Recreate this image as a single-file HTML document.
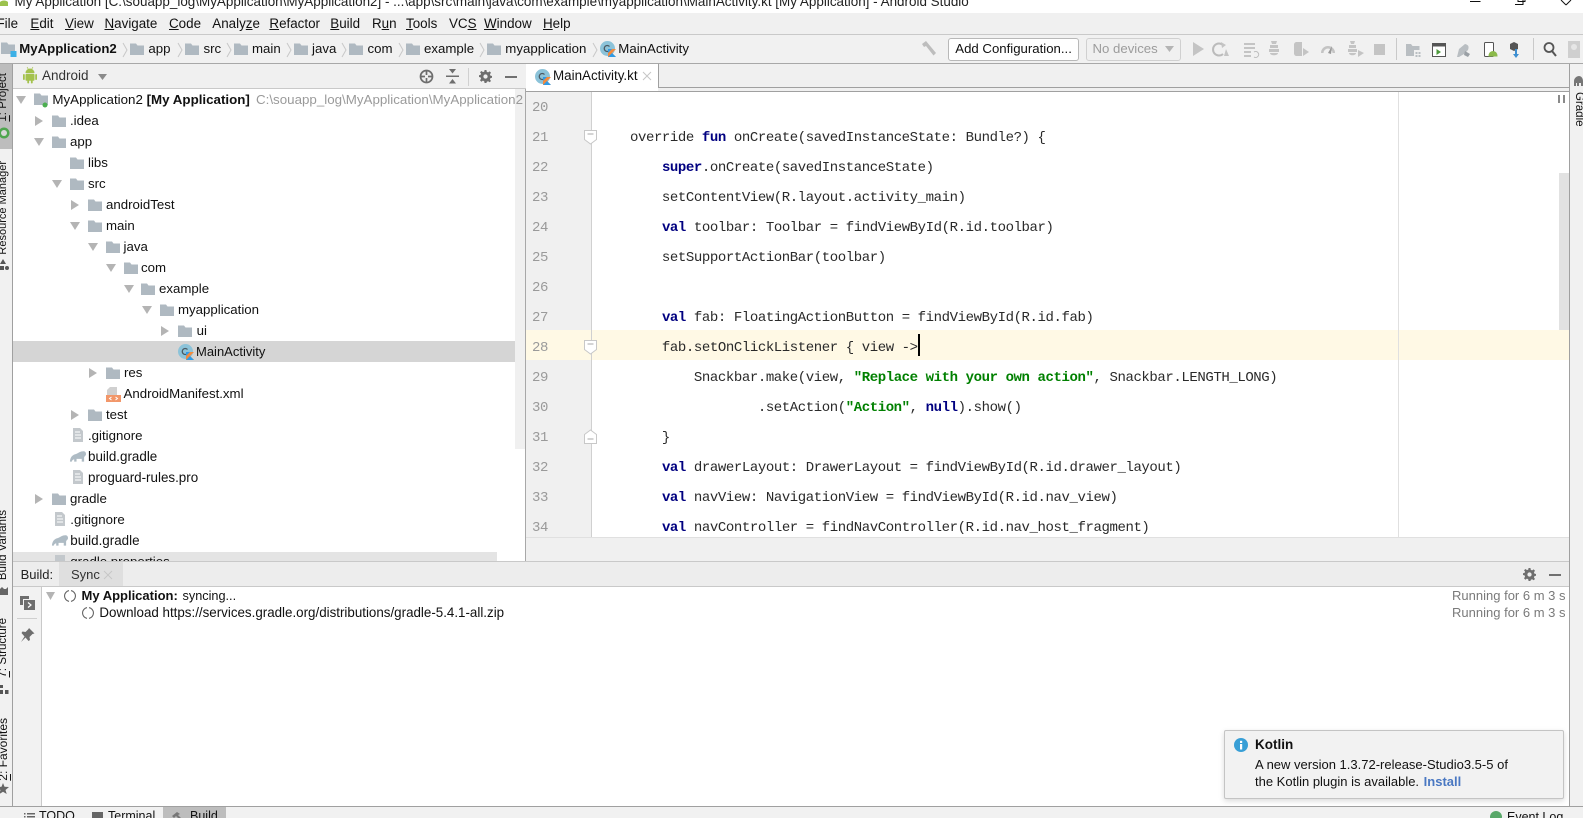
<!DOCTYPE html>
<html><head><meta charset="utf-8"><style>
html,body{margin:0;padding:0;width:1583px;height:818px;overflow:hidden;background:#fff}
body{position:relative;font-family:"Liberation Sans","Noto Sans CJK SC",sans-serif;font-size:13.25px;color:#111}
.a,.t,.c,.n{position:absolute}
.t{white-space:pre;line-height:20px;height:20px}
.c{white-space:pre;line-height:20px;height:20px;left:598px;font-family:"Liberation Mono",monospace;font-size:14px;letter-spacing:-.41px;color:#2a2a2a}
.n{white-space:pre;line-height:20px;height:20px;left:532px;font-family:"Liberation Mono",monospace;font-size:14px;letter-spacing:-.4px;color:#9a9a9a}
.c b{color:#000080}.c i{color:#008000;font-weight:bold;font-style:normal}
svg{position:absolute;overflow:visible}
.v{position:absolute;writing-mode:vertical-rl;transform:rotate(180deg);white-space:pre;line-height:13px;font-size:11.5px;color:#111}
u{text-decoration:underline}
.m{font-size:13.4px;top:14px}
.b{font-size:13.25px;top:39px}
</style></head><body>
<svg width="0" height="0" style="position:absolute"><defs>
<symbol id="f" viewBox="0 0 14 12"><path d="M0 0.5h6l1.5 2H14V12H0z" fill="#afb9c1"/></symbol>
<symbol id="k" viewBox="0 0 16 16"><circle cx="7.5" cy="7.5" r="7.5" fill="#8cc3d9"/><path d="M9.5 5.5A3 3 0 1 0 9.5 9.5" fill="none" stroke="#4b5a63" stroke-width="1.3"/><path d="M8 16V8h8L12 12l4 4z" fill="#f58a3c"/><path d="M8 16l4-4 4 4z" fill="#2f9be6"/><path d="M8 12l4-4h-4z" fill="#2f9be6"/></symbol>
<symbol id="r" viewBox="0 0 8 10"><path d="M0 0l8 5-8 5z" fill="#b4b4b4"/></symbol>
<symbol id="d" viewBox="0 0 10 8"><path d="M0 0h10L5 8z" fill="#b4b4b4"/></symbol>
<symbol id="file" viewBox="0 0 12 14"><path d="M1 0h7l3 3v11H1z" fill="#c3c8cc"/><path d="M3 4h5M3 7h6M3 10h6" stroke="#fff"/></symbol>
<symbol id="g" viewBox="0 0 18 12"><path d="M1 12c0-2 1-7 6-8 3-1 5-3 8-3 2 0 3 1 3 3 0 2-2 2-2 4v4h-2.500V9H8v3H5.500V9.500C4 10 3 11 3 12z" fill="#aebbc4"/></symbol>
<symbol id="gear" viewBox="0 0 14 14"><path fill-rule="evenodd" d="M6 0h2l.4 2 1.400.6L11.500 1.500 12.900 3l-1.100 1.600.5 1.400 1.700.4v2l-1.700.4-.5 1.400 1.100 1.600-1.400 1.400-1.700-1.100-1.400.6L8 14H6l-.4-1.900-1.400-.6-1.700 1.100L1.100 11l1.100-1.600-.5-1.400L0 7.600v-2L1.700 5.200l.5-1.400L1.100 2.500 2.500 1.100l1.700 1.100L5.600 1.900zM7 4.700A2.300 2.300 0 1 0 7 9.300 2.300 2.300 0 0 0 7 4.700z" fill="#6e6e6e"/></symbol>
<symbol id="spin" viewBox="0 0 12 12"><path d="M5 .6A5.500 5.500 0 0 0 5 11.400M7 .6A5.500 5.500 0 0 1 7 11.400" fill="none" stroke="#666" stroke-width="1.100"/></symbol>
</defs></svg>

<!-- backgrounds -->
<div class="a" style="left:0;top:13px;width:1583px;height:21px;background:#f0f0f0"></div>
<div class="a" style="left:0;top:34px;width:1583px;height:1px;background:#c9c9c9"></div>
<div class="a" style="left:0;top:35px;width:1583px;height:28px;background:#f1f1f1"></div>
<div class="a" style="left:0;top:63px;width:1583px;height:1px;background:#a8a8a8"></div>

<!-- title bar -->
<svg style="left:0;top:0" width="9" height="6"><path d="M0 6V2c2-2 6-2 8 0v4z" fill="#9cc24e"/></svg>
<div class="t" id="title" style="left:14.500px;top:-8px;font-size:13.44px;color:#222">My Application [C:\souapp_log\MyApplication\MyApplication2] - ...\app\src\main\java\com\example\myapplication\MainActivity.kt [My Application] - Android Studio</div>
<svg style="left:1470px;top:0" width="102" height="6"><path d="M0 1.500h10.500" stroke="#111" stroke-width="1"/><path d="M45 4.500H53V0M48 0V1.500H55V0" fill="none" stroke="#111"/><path d="M91 0l5 5M101 0l-5 5" stroke="#111"/></svg>

<!-- menu -->
<div class="t m" style="left:-3.500px">File</div>
<div class="t m" style="left:30.400px"><u>E</u>dit</div>
<div class="t m" style="left:65px"><u>V</u>iew</div>
<div class="t m" style="left:104.500px"><u>N</u>avigate</div>
<div class="t m" style="left:169px"><u>C</u>ode</div>
<div class="t m" style="left:212.300px">Analy<u>z</u>e</div>
<div class="t m" style="left:269.400px"><u>R</u>efactor</div>
<div class="t m" style="left:330.300px"><u>B</u>uild</div>
<div class="t m" style="left:372px">R<u>u</u>n</div>
<div class="t m" style="left:406px"><u>T</u>ools</div>
<div class="t m" style="left:449px">VC<u>S</u></div>
<div class="t m" style="left:484px"><u>W</u>indow</div>
<div class="t m" style="left:543px"><u>H</u>elp</div>

<!-- breadcrumb -->
<svg style="left:1px;top:42px" width="16" height="15"><use href="#f" width="14" height="12"/><rect x="9.500" y="9" width="6" height="6" fill="#3cb0e6"/></svg>
<div class="t b" style="left:19.300px;font-weight:bold;font-size:13.2px">MyApplication2</div>
<svg style="left:123px;top:42px" width="480" height="16" fill="none" stroke="#c8c8c8"><path d="M0 1l4 7-4 7M55 1l4 7-4 7M104 1l4 7-4 7M164 1l4 7-4 7M219 1l4 7-4 7M276 1l4 7-4 7M357 1l4 7-4 7M470 1l4 7-4 7"/></svg>
<svg style="left:130px;top:43px" width="14" height="12"><use href="#f"/></svg><div class="t b" style="left:148.400px">app</div>
<svg style="left:185px;top:43px" width="14" height="12"><use href="#f"/></svg><div class="t b" style="left:203.500px">src</div>
<svg style="left:234px;top:43px" width="14" height="12"><use href="#f"/></svg><div class="t b" style="left:252px">main</div>
<svg style="left:294px;top:43px" width="14" height="12"><use href="#f"/></svg><div class="t b" style="left:312px">java</div>
<svg style="left:349px;top:43px" width="14" height="12"><use href="#f"/></svg><div class="t b" style="left:367.500px">com</div>
<svg style="left:406px;top:43px" width="14" height="12"><use href="#f"/></svg><div class="t b" style="left:424px">example</div>
<svg style="left:487px;top:43px" width="14" height="12"><use href="#f"/></svg><div class="t b" style="left:505.300px">myapplication</div>
<svg style="left:600px;top:41px" width="16" height="16"><use href="#k"/></svg><div class="t b" style="left:618.300px">MainActivity</div>

<!-- toolbar right -->
<svg style="left:921px;top:41px" width="16" height="16"><path d="M1 3l4-3 10 12-2.500 2.500L5 5 3 6z" fill="#bdbdbd"/></svg>
<div class="a" style="left:948px;top:38px;width:128.500px;height:20.500px;border:1px solid #b8b8b8;border-radius:3px;background:#fff"></div>
<div class="t" style="left:955.300px;top:39px;font-size:13.2px">Add Configuration...</div>
<div class="a" style="left:1085.500px;top:38px;width:93px;height:20.500px;border:1px solid #d0d0d0;border-radius:3px;background:#f0f0f0"></div>
<div class="t" style="left:1092.500px;top:39px;font-size:13.200px;color:#9c9c9c">No devices</div>
<svg style="left:1165px;top:46px" width="9" height="6"><path d="M0 0h9L4.500 6z" fill="#b4b4b4"/></svg>
<svg style="left:1190px;top:40px" width="200" height="18" fill="#c4c4c4">
<path d="M3 2l11 7-11 7z"/>
<path d="M33 5a6 6 0 1 0 0 9" fill="none" stroke="#bbb" stroke-width="2"/><path d="M31 2l5 3-4 3zM36 9l3 7h-5z"/>
<path d="M54 3h11v2H54zM54 7h11v2H54zM54 11h7v2H54zM54 15h7v2H54z"/><path d="M64 12a3 3 0 1 1 0 5" fill="none" stroke="#bbb"/>
<path d="M80 5h8v3h-8zM79 9h10v3H79zM80 13h8c0 3-8 3-8 0zM81 1l1 3h4l1-3z"/>
<path d="M106 2h6v14h-6a3 3 0 0 1-2-2V4a3 3 0 0 1 2-2zM113 8l6 4-6 4z"/>
<path d="M131 13a7 7 0 1 1 14 0h-2.500a4.500 4.500 0 0 0-9 0z"/><path d="M138 13l4-7 -1 8z" fill="#999"/>
<path d="M159 5h7v3h-7zM158 9h9v3h-9zM159 13h7c0 3-7 3-7 0zM160 1l1 3h3l1-3zM168 10l6 3-6 4z"/>
<rect x="184" y="4" width="11" height="11"/>
<rect x="206" y="-2" width="1" height="22" fill="#c9c9c9"/></svg>
<svg style="left:1405px;top:40px" width="175" height="20">
<path d="M1 4h5l1.500 2h7v4H9v6H1z" fill="#b9bec2"/><path d="M10.500 12h2v2h-2zM13.500 12h2v2h-2zM10.500 15h2v2h-2zM13.500 15h2v2h-2z" fill="#b9bec2"/>
<rect x="27.500" y="3.500" width="13" height="13" fill="#fff" stroke="#555"/><rect x="27.500" y="3.500" width="13" height="3" fill="#555"/><path d="M31.500 9l4.500 3-4.500 3z" fill="#4e9a3c"/>
<path d="M52 17l2-8 6-5c4 1 4 3 3 6l-4 4-5 3z" fill="#b9bec2"/><path d="M60 11l5 3-2 3-4-2z" fill="#9aa0a5"/>
<rect x="79.500" y="2.500" width="9" height="14" rx="1" fill="#fff" stroke="#555"/><path d="M84 16c0-6 8-6 8 0z" fill="#8cba4a" stroke="#8cba4a"/>
<path d="M105 4l4-2 4 2v5l-4 2-4-2z" fill="#555"/><rect x="110" y="9" width="2" height="6" fill="#3d8fd1"/><path d="M108 14h6l-3 4z" fill="#3d8fd1"/>
<rect x="128" y="-2" width="1" height="22" fill="#c9c9c9"/>
<circle cx="144" cy="7.500" r="4.500" fill="none" stroke="#555" stroke-width="1.800"/><path d="M147 11l4 5" stroke="#555" stroke-width="2"/>
<rect x="163" y="1" width="12" height="17" fill="#cfcfcf"/><circle cx="169" cy="7" r="3" fill="#e6e6e6"/></svg>

<!-- left strip -->
<div class="a" style="left:0;top:64px;width:12px;height:742px;background:#f1f1f1"></div>
<div class="a" style="left:0;top:64px;width:12px;height:85px;background:#bdbdbd"></div>
<div class="a" style="left:12px;top:64px;width:1px;height:742px;background:#a0a0a0"></div>
<div class="v" style="left:-3px;top:73px"><u>1</u>: Project</div>
<svg style="left:-2px;top:127px" width="12" height="12"><circle cx="6" cy="6" r="5.500" fill="#4fa64f"/><circle cx="6" cy="6" r="3" fill="#d8d8d8"/></svg>
<div class="v" style="left:-3px;top:161px;font-size:11px">Resource Manager</div>
<svg style="left:0;top:259px" width="9" height="13" fill="#555"><path d="M3 0l3 5H0z"/><rect x="0" y="7" width="4" height="4"/><circle cx="7" cy="9" r="2"/></svg>
<div class="v" style="left:-3px;top:510px">Build Variants</div>
<svg style="left:0;top:587px" width="9" height="8"><path d="M0 8V2l2-2 2 2h2l2-2v8z" fill="#666"/></svg>
<div class="v" style="left:-3px;top:618px"><u>7</u>: Structure</div>
<svg style="left:0;top:685px" width="9" height="10" fill="#555"><rect x="0" y="0" width="3" height="3"/><rect x="0" y="5" width="3" height="4"/><rect x="5" y="5" width="3.500" height="4"/></svg>
<div class="v" style="left:-3px;top:718px;font-size:12px"><u>2</u>: Favorites</div>
<svg style="left:-2px;top:783px" width="11" height="11"><path d="M5 0l1.500 3.800L11 4 7.500 7l1.200 4L5 8.800 1.300 11l1.200-4L-1 4l4.500-.2z" fill="#666"/></svg>

<!-- project header -->
<div class="a" style="left:13px;top:64px;width:513px;height:24px;background:#f0f0f0"></div>
<div class="a" style="left:13px;top:88px;width:513px;height:1px;background:#c9c9c9"></div>
<svg style="left:23px;top:67px" width="14" height="17" fill="#a4c24d"><path d="M2.500 6a4.500 4.500 0 0 1 9 0z"/><rect x="2.500" y="6.800" width="9" height="7" rx="1"/><rect x="0" y="7" width="1.800" height="6" rx=".9"/><rect x="12.200" y="7" width="1.800" height="6" rx=".9"/><rect x="4.300" y="13" width="1.800" height="3.500" rx=".9"/><rect x="7.900" y="13" width="1.800" height="3.500" rx=".9"/><path d="M4 0l1.500 2.500M10 0L8.500 2.500" stroke="#a4c24d" stroke-width=".7"/></svg>
<div class="t" style="left:42px;top:66px;font-size:13.5px;color:#333">Android</div>
<svg style="left:98px;top:74px" width="9" height="6"><path d="M0 0h9L4.500 6z" fill="#8a8a8a"/></svg>
<svg style="left:419px;top:69px" width="15" height="15" fill="none" stroke="#6e6e6e" stroke-width="1.700"><circle cx="7.500" cy="7.500" r="6"/><path d="M7.500 2v4M7.500 9v4M2 7.500h4M9 7.500h4"/></svg>
<svg style="left:446px;top:69px" width="13" height="15" fill="#6e6e6e"><rect y="6.500" width="13" height="1.500"/><path d="M3 0h7L6.500 4.500zM3 14.500h7L6.500 10z"/></svg>
<div class="a" style="left:468px;top:68px;width:1px;height:18px;background:#d0d0d0"></div>
<svg style="left:479px;top:70px" width="13" height="13"><use href="#gear"/></svg>
<div class="a" style="left:505px;top:75.500px;width:12px;height:2px;background:#707070"></div>

<!-- tree -->
<div class="a" style="left:13px;top:341px;width:513px;height:21px;background:#d5d5d5"></div>
<div class="a" style="left:515px;top:89px;width:10px;height:360px;background:#f0f0f0"></div>
<div class="a" style="left:13px;top:551.500px;width:484px;height:10px;background:#e4e4e4"></div>
<div class="a" style="left:525px;top:89px;width:1px;height:473px;background:#a8a8a8"></div>

<svg style="left:16px;top:96px" width="10" height="8"><use href="#d"/></svg>
<svg style="left:34px;top:93px" width="14" height="12"><use href="#f"/></svg>
<svg style="left:42px;top:102px" width="6" height="6"><circle cx="3" cy="3" r="2.500" fill="#4caf50"/></svg>
<div class="t" style="left:52.400px;top:89.500px;font-size:13.35px">MyApplication2 <b>[My Application]</b></div>
<div class="t" style="left:256px;top:89.500px;color:#9a9a9a;font-size:13.35px">C:\souapp_log\MyApplication\MyApplication2</div>

<svg style="left:35px;top:116px" width="8" height="10"><use href="#r"/></svg><svg style="left:52.400px;top:115px" width="14" height="12"><use href="#f"/></svg><div class="t" style="left:70px;top:110.500px">.idea</div>
<svg style="left:34px;top:138px" width="10" height="8"><use href="#d"/></svg><svg style="left:52.400px;top:136px" width="14" height="12"><use href="#f"/></svg><div class="t" style="left:70px;top:131.500px">app</div>
<svg style="left:70px;top:157px" width="14" height="12"><use href="#f"/></svg><div class="t" style="left:88px;top:152.500px">libs</div>
<svg style="left:52px;top:180px" width="10" height="8"><use href="#d"/></svg><svg style="left:70px;top:178px" width="14" height="12"><use href="#f"/></svg><div class="t" style="left:88px;top:173.500px">src</div>
<svg style="left:71px;top:200px" width="8" height="10"><use href="#r"/></svg><svg style="left:88px;top:199px" width="14" height="12"><use href="#f"/></svg><div class="t" style="left:106px;top:194.500px">androidTest</div>
<svg style="left:70px;top:222px" width="10" height="8"><use href="#d"/></svg><svg style="left:88px;top:220px" width="14" height="12"><use href="#f"/></svg><div class="t" style="left:106px;top:215.500px">main</div>
<svg style="left:88px;top:243px" width="10" height="8"><use href="#d"/></svg><svg style="left:106px;top:241px" width="14" height="12"><use href="#f"/></svg><div class="t" style="left:123.500px;top:236.500px">java</div>
<svg style="left:106px;top:264px" width="10" height="8"><use href="#d"/></svg><svg style="left:123.500px;top:262px" width="14" height="12"><use href="#f"/></svg><div class="t" style="left:141px;top:257.500px">com</div>
<svg style="left:124px;top:285px" width="10" height="8"><use href="#d"/></svg><svg style="left:141px;top:283px" width="14" height="12"><use href="#f"/></svg><div class="t" style="left:159px;top:278.500px">example</div>
<svg style="left:142px;top:306px" width="10" height="8"><use href="#d"/></svg><svg style="left:160px;top:304px" width="14" height="12"><use href="#f"/></svg><div class="t" style="left:178px;top:299.500px">myapplication</div>
<svg style="left:161px;top:326px" width="8" height="10"><use href="#r"/></svg><svg style="left:178px;top:325px" width="14" height="12"><use href="#f"/></svg><div class="t" style="left:196.600px;top:320.500px">ui</div>
<svg style="left:178px;top:344px" width="16" height="16"><use href="#k"/></svg><div class="t" style="left:196px;top:341.500px;font-size:13px">MainActivity</div>
<svg style="left:89px;top:368px" width="8" height="10"><use href="#r"/></svg><svg style="left:106px;top:367px" width="14" height="12"><use href="#f"/></svg><div class="t" style="left:124px;top:362.500px">res</div>
<svg style="left:106px;top:387px" width="15" height="15"><path d="M4 0h7v8H1V3z" fill="#d0d0d0"/><rect y="8" width="15" height="7" fill="#f2976a"/><path d="M5.500 10l-2 1.500 2 1.500M9.500 10l2 1.500-2 1.500" fill="none" stroke="#fff"/></svg><div class="t" style="left:123.500px;top:383.500px">AndroidManifest.xml</div>
<svg style="left:71px;top:410px" width="8" height="10"><use href="#r"/></svg><svg style="left:88px;top:409px" width="14" height="12"><use href="#f"/></svg><div class="t" style="left:106px;top:404.500px">test</div>
<svg style="left:72px;top:428px" width="12" height="14"><use href="#file"/></svg><div class="t" style="left:88px;top:425.500px">.gitignore</div>
<svg style="left:69px;top:450px" width="17" height="12"><use href="#g"/></svg><div class="t" style="left:88px;top:446.500px;font-size:13.4px">build.gradle</div>
<svg style="left:72px;top:470px" width="12" height="14"><use href="#file"/></svg><div class="t" style="left:88px;top:467.500px;font-size:13.4px">proguard-rules.pro</div>
<svg style="left:35px;top:494px" width="8" height="10"><use href="#r"/></svg><svg style="left:52.400px;top:493px" width="14" height="12"><use href="#f"/></svg><div class="t" style="left:70px;top:488.500px">gradle</div>
<svg style="left:54px;top:512px" width="12" height="14"><use href="#file"/></svg><div class="t" style="left:70.300px;top:509.500px">.gitignore</div>
<svg style="left:51px;top:534px" width="17" height="12"><use href="#g"/></svg><div class="t" style="left:70.300px;top:530.500px;font-size:13.4px">build.gradle</div>
<svg style="left:54px;top:555px" width="12" height="7"><path d="M1 0h10v7H1z" fill="#c3c8cc"/></svg>
<div class="a" style="left:13px;top:551.500px;width:484px;height:10px;overflow:hidden"><div class="t" style="left:57.300px;top:0px">gradle.properties</div></div>

<!-- tab strip -->
<div class="a" style="left:526px;top:64px;width:1043px;height:23px;background:#f0f0f0"></div>
<div class="a" style="left:526px;top:87px;width:1043px;height:1px;background:#a0a0a0"></div>
<div class="a" style="left:526px;top:88px;width:1043px;height:3px;background:#f0f0f0"></div>
<div class="a" style="left:526px;top:91px;width:1043px;height:1px;background:#a0a0a0"></div>
<div class="a" style="left:526px;top:64px;width:132px;height:24px;background:#fff;border-right:1px solid #a0a0a0"></div>
<div class="a" style="left:526px;top:88px;width:132px;height:3px;background:#fff"></div>
<svg style="left:535px;top:69px" width="16" height="16"><use href="#k"/></svg>
<div class="t" style="left:553px;top:66px;font-size:13.4px">MainActivity.kt</div>
<svg style="left:643px;top:72px" width="9" height="9"><path d="M0 0l8 8M8 0L0 8" stroke="#c6c6c6"/></svg>

<!-- editor -->
<div class="a" style="left:526px;top:92px;width:1043px;height:445px;background:#fff"></div>
<div class="a" style="left:526px;top:92px;width:64.500px;height:445px;background:#f0f0f0"></div>
<div class="a" style="left:526px;top:330px;width:1043px;height:30px;background:#fff9e5"></div>
<div class="a" style="left:590.500px;top:92px;width:1px;height:445px;background:#d0d0d0"></div>
<div class="a" style="left:1398px;top:92px;width:1px;height:445px;background:#e0e0e0"></div>
<div class="a" style="left:1559px;top:172.500px;width:10px;height:157px;background:#e2e2e2"></div>
<svg style="left:1558px;top:95px" width="8" height="9" fill="#8a8a8a"><rect width="2" height="8"/><rect x="5" width="2" height="8"/></svg>
<div class="a" style="left:526px;top:537px;width:1043px;height:1px;background:#e0e0e0"></div>
<div class="a" style="left:526px;top:538px;width:1043px;height:23px;background:#f0f0f0"></div>

<div class="n" style="top:98px">20</div>
<div class="n" style="top:128px">21</div>
<div class="n" style="top:158px">22</div>
<div class="n" style="top:188px">23</div>
<div class="n" style="top:218px">24</div>
<div class="n" style="top:248px">25</div>
<div class="n" style="top:278px">26</div>
<div class="n" style="top:308px">27</div>
<div class="n" style="top:338px">28</div>
<div class="n" style="top:368px">29</div>
<div class="n" style="top:398px">30</div>
<div class="n" style="top:428px">31</div>
<div class="n" style="top:458px">32</div>
<div class="n" style="top:488px">33</div>
<div class="n" style="top:518px">34</div>

<svg style="left:584px;top:130px" width="13" height="15"><path d="M.5.500h12v9l-6 4.500-6-4.500z" fill="#fff" stroke="#c8c8c8"/><path d="M3.500 4h6" stroke="#aaa"/></svg>
<svg style="left:584px;top:340px" width="13" height="15"><path d="M.5.500h12v9l-6 4.500-6-4.500z" fill="#fff" stroke="#c8c8c8"/><path d="M3.500 4h6" stroke="#aaa"/></svg>
<svg style="left:584px;top:429px" width="13" height="15"><path d="M.5 14.500h12v-9l-6-4.500-6 4.500z" fill="#fff" stroke="#c8c8c8"/><path d="M3.500 10h6" stroke="#aaa"/></svg>

<div class="c" style="top:128px">    override <b>fun</b> onCreate(savedInstanceState: Bundle?) {</div>
<div class="c" style="top:158px">        <b>super</b>.onCreate(savedInstanceState)</div>
<div class="c" style="top:188px">        setContentView(R.layout.activity_main)</div>
<div class="c" style="top:218px">        <b>val</b> toolbar: Toolbar = findViewById(R.id.toolbar)</div>
<div class="c" style="top:248px">        setSupportActionBar(toolbar)</div>
<div class="c" style="top:308px">        <b>val</b> fab: FloatingActionButton = findViewById(R.id.fab)</div>
<div class="c" style="top:338px">        fab.setOnClickListener { view -&gt;</div>
<div class="c" style="top:368px">            Snackbar.make(view, <i>"Replace with your own action"</i>, Snackbar.LENGTH_LONG)</div>
<div class="c" style="top:398px">                    .setAction(<i>"Action"</i>, <b>null</b>).show()</div>
<div class="c" style="top:428px">        }</div>
<div class="c" style="top:458px">        <b>val</b> drawerLayout: DrawerLayout = findViewById(R.id.drawer_layout)</div>
<div class="c" style="top:488px">        <b>val</b> navView: NavigationView = findViewById(R.id.nav_view)</div>
<div class="c" style="top:518px">        <b>val</b> navController = findNavController(R.id.nav_host_fragment)</div>
<div class="a" style="left:918px;top:334px;width:2px;height:22px;background:#000"></div>

<!-- right strip -->
<div class="a" style="left:1569px;top:64px;width:1px;height:742px;background:#a0a0a0"></div>
<div class="a" style="left:1570px;top:64px;width:13px;height:742px;background:#f1f1f1"></div>
<svg style="left:1574px;top:76px" width="9" height="10"><path d="M0 10V5c0-3 3-5 5-5s4 2 4 5v5H7V7H5v3H3V7H2v3z" fill="#777"/></svg>
<div class="a" style="left:1572px;top:91.500px;writing-mode:vertical-rl;white-space:pre;line-height:13px;font-size:11.500px">Gradle</div>

<!-- build panel -->
<div class="a" style="left:13px;top:561px;width:1556px;height:1px;background:#c9c9c9"></div>
<div class="a" style="left:13px;top:562px;width:1556px;height:24px;background:#ededed"></div>
<div class="a" style="left:13px;top:586px;width:1556px;height:1px;background:#c9c9c9"></div>
<div class="a" style="left:59px;top:562px;width:64px;height:24px;background:#dfdfdf"></div>
<div class="t" style="left:20.600px;top:564.500px;font-size:13px;color:#222">Build:</div>
<div class="t" style="left:71px;top:564.500px;font-size:13px;color:#333">Sync</div>
<svg style="left:104px;top:571px" width="9" height="9"><path d="M0 0l8 8M8 0L0 8" stroke="#c6c6c6"/></svg>
<svg style="left:1523px;top:568px" width="13" height="13"><use href="#gear"/></svg>
<div class="a" style="left:1549px;top:573.500px;width:12px;height:2px;background:#707070"></div>

<div class="a" style="left:13px;top:587px;width:28px;height:219px;background:#f2f2f2"></div>
<div class="a" style="left:41px;top:587px;width:1px;height:219px;background:#c9c9c9"></div>
<svg style="left:20px;top:596px" width="15" height="14"><path d="M0 0h9v3H3v6H0z" fill="#6e6e6e"/><rect x="4" y="4" width="11" height="10" fill="#6e6e6e"/><path d="M8 6.500l3 2.500-3 2.500" fill="none" stroke="#fff" stroke-width="1.200"/></svg>
<div class="a" style="left:17px;top:618px;width:20px;height:1px;background:#cfcfcf"></div>
<svg style="left:20px;top:628px" width="15" height="15"><path d="M9 0l5.500 5.500-2 .5-3 3 .5 3-1.500 1-3-3.500L1 14l3.500-5.500L1.500 5l1-1.500 3 .5 3-3z" fill="#6e6e6e"/></svg>

<svg style="left:46px;top:592px" width="9" height="8"><path d="M0 0h9L4.500 8z" fill="#b4b4b4"/></svg>
<svg style="left:64px;top:590px" width="12" height="12"><use href="#spin"/></svg>
<div class="t" style="left:81.500px;top:585.500px;font-size:13px"><b>My Application:</b></div>
<div class="t" style="left:182.500px;top:585.500px;font-size:12.700px">syncing...</div>
<svg style="left:82px;top:607px" width="12" height="12"><use href="#spin"/></svg>
<div class="t" style="left:99.400px;top:602.500px;font-size:13.36px">Download https://services.gradle.org/distributions/gradle-5.4.1-all.zip</div>
<div class="t" style="right:17.500px;top:586px;color:#7a7a7a;font-size:13px">Running for 6 m 3 s</div>
<div class="t" style="right:17.500px;top:602.500px;color:#7a7a7a;font-size:13px">Running for 6 m 3 s</div>

<!-- bottom bar -->
<div class="a" style="left:0;top:806px;width:1583px;height:1px;background:#a0a0a0"></div>
<div class="a" style="left:0;top:807px;width:1583px;height:11px;background:#f1f1f1"></div>
<div class="a" style="left:163px;top:807px;width:63px;height:11px;background:#bdbdbd"></div>
<svg style="left:24px;top:813px" width="11" height="5" fill="#666"><rect width="1.500" height="1.500"/><rect x="3" width="8" height="1.500"/><rect y="3" width="1.500" height="1.500"/><rect x="3" y="3" width="8" height="1.500"/></svg>
<div class="t" style="left:39px;top:806px;font-size:12.5px">TODO</div>
<svg style="left:92px;top:812px" width="11" height="6"><rect width="11" height="6" fill="#666"/></svg>
<div class="t" style="left:108px;top:806px;font-size:12.5px">Terminal</div>
<svg style="left:172px;top:812px" width="10" height="6"><path d="M0 4l5-4 3 2-2 1 3 3H6L4 4 2 6z" fill="#777"/></svg>
<div class="t" style="left:190px;top:806px;font-size:12.5px">Build</div>
<svg style="left:1490px;top:811px" width="12" height="7"><circle cx="6" cy="6" r="6" fill="#59a869"/></svg>
<div class="t" style="left:1507px;top:807px;font-size:12.5px">Event Log</div>

<!-- notification -->
<div class="a" style="left:1223.500px;top:729.500px;width:338px;height:67px;background:#f2f2f2;border:1px solid #c4c4c4;border-radius:2px;box-shadow:0 2px 6px rgba(0,0,0,.15)"></div>
<svg style="left:1234px;top:737.500px" width="14" height="14"><circle cx="7" cy="7" r="7" fill="#389fd6"/><rect x="6" y="6" width="2.200" height="5.500" fill="#fff"/><rect x="6" y="2.800" width="2.200" height="2.200" fill="#fff"/></svg>
<div class="t" style="left:1255px;top:734.500px;font-weight:bold;font-size:13.5px">Kotlin</div>
<div class="t" style="left:1255px;top:755px;font-size:13px">A new version 1.3.72-release-Studio3.5-5 of</div>
<div class="t" style="left:1255px;top:772px;font-size:13px">the Kotlin plugin is available. <b style="color:#4a78c2;margin-left:1px">Install</b></div>
</body></html>
